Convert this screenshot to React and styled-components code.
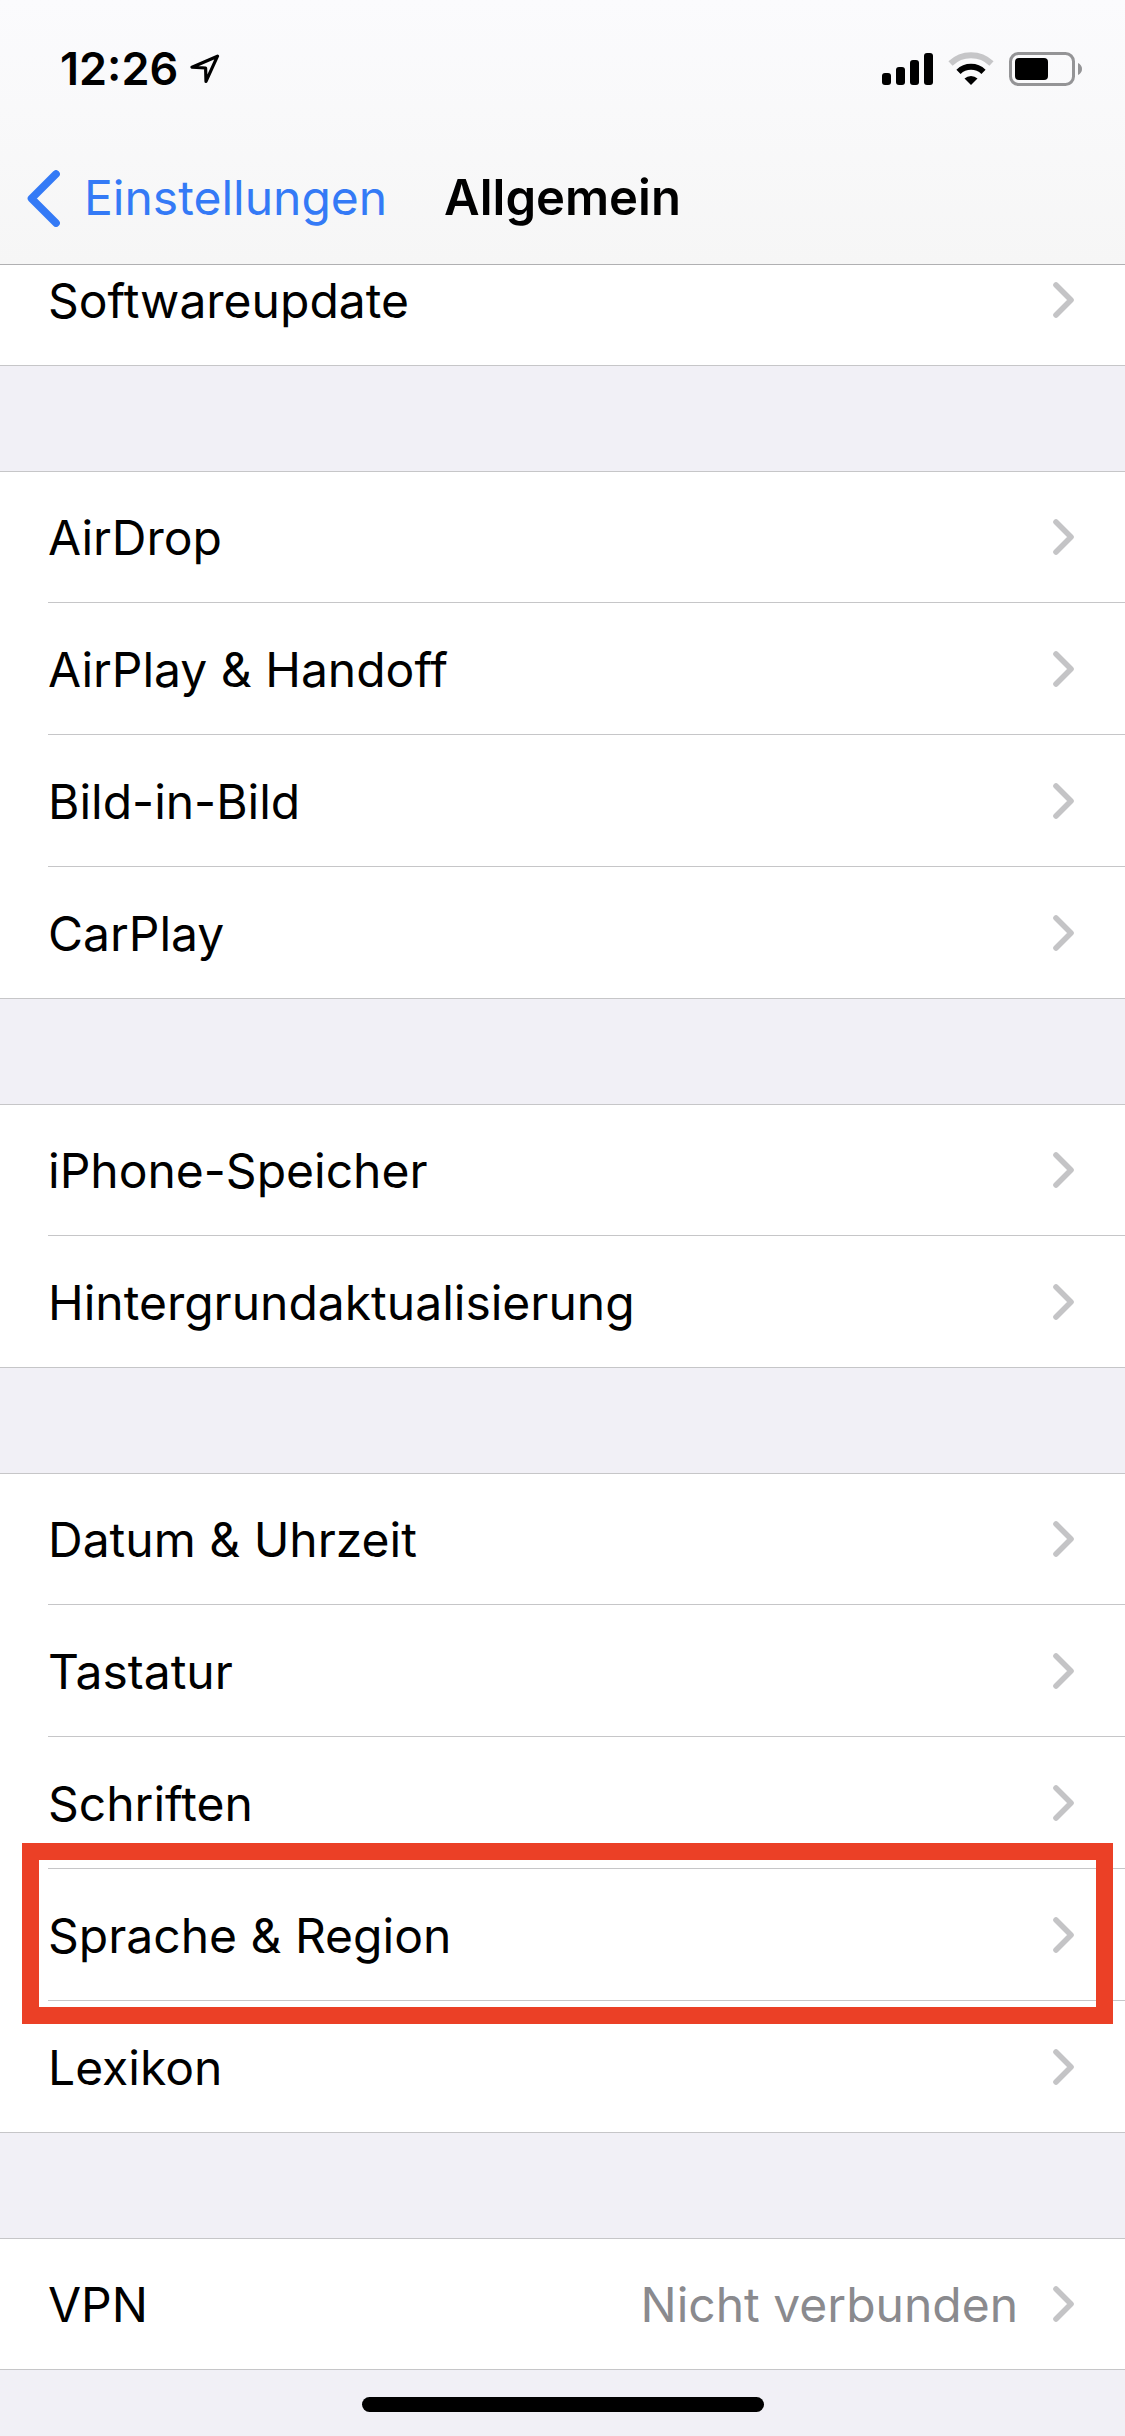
import React from "react";
import styled, { createGlobalStyle } from "styled-components";

const groups = [
  [{ label: "Softwareupdate" }],
  [
    { label: "AirDrop" },
    { label: "AirPlay & Handoff" },
    { label: "Bild-in-Bild" },
    { label: "CarPlay" },
  ],
  [{ label: "iPhone-Speicher" }, { label: "Hintergrundaktualisierung" }],
  [
    { label: "Datum & Uhrzeit" },
    { label: "Tastatur" },
    { label: "Schriften" },
    { label: "Sprache & Region", marked: true },
    { label: "Lexikon" },
  ],
  [{ label: "VPN", value: "Nicht verbunden" }],
];

function StatusIcons() {
  return (
    <svg width="200" height="34" viewBox="0 0 200 34" aria-hidden="true">
      {/* signal */}
      <rect x="0" y="21" width="9" height="12" rx="3" />
      <rect x="14" y="15" width="9" height="18" rx="3" />
      <rect x="28" y="8" width="9" height="25" rx="3" />
      <rect x="42" y="1" width="9" height="32" rx="3" />
      {/* wifi */}
      <path
        d="M68.5 11.5a29.5 29.5 0 0 1 41 0"
        fill="none"
        stroke="#c6c6c8"
        strokeWidth="6"
      />
      <path
        d="M76.5 19.8a18 18 0 0 1 25 0"
        fill="none"
        stroke="#000"
        strokeWidth="6"
      />
      <path d="M82.5 26.5a9.5 9.5 0 0 1 13 0L89 33z" />
      {/* battery */}
      <rect
        x="128.500"
        y="1.500"
        width="63"
        height="31"
        rx="8"
        fill="none"
        stroke="#949496"
        strokeWidth="3"
      />
      <rect x="133" y="6" width="33" height="22" rx="4" />
      <path d="M196 11v12c2.500-1 4-3.400 4-6s-1.500-5-4-6z" fill="#949496" />
    </svg>
  );
}

function LocationArrow() {
  return (
    <svg width="30" height="30" viewBox="0 0 30 30" aria-hidden="true">
      <path
        d="M27.500 2.200 2 13.200 15.600 14 16 27.400z"
        fill="none"
        stroke="#000"
        strokeWidth="3.200"
        strokeLinejoin="round"
      />
    </svg>
  );
}

function Chevron() {
  return (
    <svg width="21" height="36" viewBox="0 0 21 36" aria-hidden="true">
      <path
        d="M3 3 18 18 3 33"
        fill="none"
        stroke="#c4c4c6"
        strokeWidth="5.600"
        strokeLinecap="round"
        strokeLinejoin="round"
      />
    </svg>
  );
}

function SettingsRow(props) {
  return (
    <Row $marked={props.marked}>
      <RowLink href="#">
        <Label>{props.label}</Label>
        {props.value && <Value>{props.value}</Value>}
        <Chevron />
      </RowLink>
    </Row>
  );
}

function App() {
  return (
    <Page>
      <GlobalStyle />
      <Header>
        <StatusBar>
          <Time>
            12:26
            <LocationArrow />
          </Time>
          <StatusIcons />
        </StatusBar>
        <NavBar>
          <BackLink href="#">
            <svg width="33" height="57" viewBox="0 0 33 57" aria-hidden="true">
              <path
                d="M29 4 4.500 28.500 29 53"
                fill="none"
                stroke="#347af6"
                strokeWidth="7.600"
                strokeLinecap="round"
                strokeLinejoin="round"
              />
            </svg>
            Einstellungen
          </BackLink>
          <Title>Allgemein</Title>
        </NavBar>
      </Header>
      <Content>
        {groups.map((rows) => (
          <Group key={rows[0].label}>
            {rows.map((row) => (
              <SettingsRow key={row.label} {...row} />
            ))}
          </Group>
        ))}
      </Content>
      <HomeIndicator />
    </Page>
  );
}

export default App;

const GlobalStyle = createGlobalStyle`
  * {
    box-sizing: border-box;
  }
  body {
    margin: 0;
    background: #f1f0f6;
    color: #000;
    font-family: Inter, "Liberation Sans", sans-serif;
    font-size: 48px;
    line-height: 60px;
  }
  a {
    color: inherit;
    text-decoration: none;
  }
  svg {
    display: block;
    flex: none;
  }
`;

const Page = styled.div`
  min-height: 100vh;
  display: flex;
  flex-direction: column;
`;

const Header = styled.header`
  position: sticky;
  top: 0;
  z-index: 2;
  background: linear-gradient(#fbfbfd, #f6f6f6);
  border-bottom: 1px solid #b0b0b2;
`;

const StatusBar = styled.div`
  height: 132px;
  padding: 6px 43px 0 60px;
  display: flex;
  align-items: center;
  justify-content: space-between;
`;

const Time = styled.div`
  display: flex;
  align-items: center;
  gap: 12px;
  font-size: 45px;
  font-weight: 600;
`;

const NavBar = styled.nav`
  height: 132px;
  padding: 0 27px;
  display: grid;
  grid-template-columns: 1fr auto 1fr;
  align-items: center;
`;

const BackLink = styled.a`
  && {
    color: #347af6;
  }
  display: flex;
  align-items: center;
  gap: 24px;
`;

const Title = styled.h1`
  margin: 0;
  font-size: 49px;
  font-weight: 600;
`;

/* the list is scrolled a little way under the header */
const Content = styled.main`
  margin-top: -31px;
  display: flex;
  flex-direction: column;
  gap: 105px;
`;

const Group = styled.ul`
  margin: 0;
  padding: 0;
  list-style: none;
  background: #fff;
  border-bottom: 1px solid #c6c6c8;
`;

const Row = styled.li`
  position: relative;
  height: 132px;
  padding-left: 48px;

  &:first-child {
    border-top: 1px solid #c6c6c8;
  }
  &:last-child {
    height: 131px;
  }

  ${(props) =>
    props.$marked &&
    `
    &::after {
      content: "";
      position: absolute;
      z-index: 1;
      top: -26px;
      right: 12px;
      bottom: -23px;
      left: 22px;
      border: 17px solid #eb4026;
      pointer-events: none;
    }
  `}
`;

const RowLink = styled.a`
  height: 100%;
  padding-right: 51px;
  display: flex;
  align-items: center;

  ${Row}:not(:last-child) > & {
    border-bottom: 1px solid #c6c6c8;
  }
`;

const Label = styled.span`
  flex: 1;
  padding-top: 2px;
`;

const Value = styled.span`
  margin-right: 35px;
  padding-top: 2px;
  color: #8a8a8e;
`;

const HomeIndicator = styled.div`
  width: 402px;
  height: 15px;
  margin: 27px auto 24px;
  border-radius: 8px;
  background: #000;
`;
